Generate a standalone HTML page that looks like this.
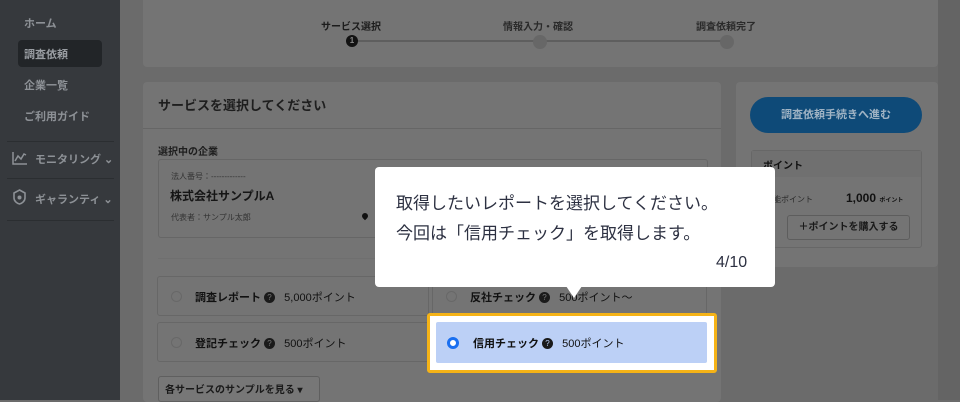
<!DOCTYPE html>
<html><head><meta charset="utf-8"><style>
*{margin:0;padding:0;box-sizing:border-box}
body{width:960px;height:400px;overflow:hidden;background:#6b6b6b;font-family:"Liberation Sans","Noto Sans CJK JP",sans-serif;position:relative;color:#111}
.a{position:absolute}
.sb{left:0;top:0;width:120px;height:400px;background:#36393d}
.sb .it{position:absolute;left:24px;font-size:11px;font-weight:bold;color:#8d9196}
.hr{position:absolute;left:7px;width:107px;height:1px;background:#2b2e31}
.card{background:#747474;border-radius:4px}
.b{font-weight:bold}
.opt{position:absolute;border:1px solid #676767;border-radius:3px;height:40px;background:#747474}
.rad{position:absolute;left:13px;top:14px;width:11px;height:11px;border:1px solid #686868;border-radius:50%}
.q{display:inline-block;width:11px;height:11px;border-radius:50%;background:#1a1a1a;color:#777;font-size:8px;text-align:center;line-height:11px;vertical-align:1px;margin-left:3px}
.ot{position:absolute;left:37px;top:12px;font-size:11px;white-space:nowrap}
</style></head><body>
<div class="a sb">
<div class="it" style="top:15px">ホーム</div>
<div class="a" style="left:18px;top:40px;width:84px;height:27px;background:#222528;border-radius:4px"></div>
<div class="it" style="top:46px;color:#9a9ea3">調査依頼</div>
<div class="it" style="top:77px">企業一覧</div>
<div class="it" style="top:108px">ご利用ガイド</div>
<div class="hr" style="top:141px"></div>
<svg class="a" style="left:12px;top:151px" width="16" height="14" viewBox="0 0 16 14"><path d="M1 1V13H15M3 10L6 5L9 8L12 3L14 4" stroke="#8d9196" stroke-width="1.5" fill="none"/></svg>
<div class="it" style="left:35px;top:151px">モニタリング ⌄</div>
<div class="hr" style="top:178px"></div>
<svg class="a" style="left:12px;top:189px" width="15" height="16" viewBox="0 0 15 16"><path d="M7.5 1L13 4V9C13 12 10 14.5 7.5 15C5 14.5 2 12 2 9V4Z" stroke="#8d9196" stroke-width="1.6" fill="none"/><circle cx="7.5" cy="8.5" r="2" fill="#8d9196"/></svg>
<div class="it" style="left:35px;top:191px">ギャランティ ⌄</div>
<div class="hr" style="top:220px"></div>
</div>
<div class="a" style="left:938px;top:0;width:22px;height:400px;background:#646464"></div>
<div class="a card" style="left:143px;top:0;width:795px;height:67px;border-radius:0 0 4px 4px"></div>
<div class="a b" style="left:321px;top:18px;font-size:10px;color:#1c1c1c">サービス選択</div>
<div class="a b" style="left:503px;top:18px;font-size:10px;color:#2a2a2a">情報入力・確認</div>
<div class="a b" style="left:696px;top:18px;font-size:10px;color:#2a2a2a">調査依頼完了</div>
<div class="a" style="left:352px;top:40px;width:376px;height:2px;background:#5e5e5e"></div>
<div class="a b" style="left:346px;top:35px;width:12px;height:12px;border-radius:50%;background:#121212;color:#888;font-size:8px;text-align:center;line-height:12px">1</div>
<div class="a" style="left:533px;top:35px;width:14px;height:14px;border-radius:50%;background:#676767"></div>
<div class="a" style="left:720px;top:35px;width:14px;height:14px;border-radius:50%;background:#676767"></div>
<div class="a card" style="left:143px;top:82px;width:578px;height:320px"></div>
<div class="a b" style="left:158px;top:95px;font-size:13px;color:#1e1e1e">サービスを選択してください</div>
<div class="a" style="left:143px;top:128px;width:578px;height:1px;background:#666"></div>
<div class="a b" style="left:158px;top:143px;font-size:10px;color:#1e1e1e">選択中の企業</div>
<div class="a" style="left:158px;top:159px;width:550px;height:79px;border:1px solid #666;border-radius:3px"></div>
<div class="a" style="left:171px;top:171px;font-size:8px;color:#333">法人番号：-------------</div>
<div class="a b" style="left:170px;top:187px;font-size:12px;color:#151515">株式会社サンプルA</div>
<div class="a" style="left:171px;top:212px;font-size:8px;color:#333">代表者：サンプル太郎</div>
<div class="a" style="left:362px;top:213px;width:6px;height:6px;border-radius:50% 50% 50% 0;transform:rotate(-45deg);background:#111"></div>
<div class="a" style="left:158px;top:258px;width:550px;height:1px;background:#6f6f6f"></div>
<div class="opt" style="left:157px;top:276px;width:272px"><div class="rad"></div><div class="ot"><b>調査レポート</b><span class="q">?</span>&nbsp;&nbsp; 5,000ポイント</div></div>
<div class="opt" style="left:432px;top:276px;width:275px"><div class="rad"></div><div class="ot"><b>反社チェック</b><span class="q">?</span>&nbsp;&nbsp; 500ポイント〜</div></div>
<div class="opt" style="left:157px;top:322px;width:272px"><div class="rad"></div><div class="ot"><b>登記チェック</b><span class="q">?</span>&nbsp;&nbsp; 500ポイント</div></div>
<div class="a" style="left:158px;top:376px;width:162px;height:26px;border:1px solid #5f5f5f;border-radius:3px;background:#777"></div>
<div class="a b" style="left:165px;top:381px;font-size:10px;color:#1a1a1a">各サービスのサンプルを見る ▾</div>
<div class="a card" style="left:736px;top:82px;width:202px;height:185px"></div>
<div class="a b" style="left:750px;top:97px;width:172px;height:36px;border-radius:18px;background:#0e4a78;color:#9fb3c4;font-size:11px;text-align:center;line-height:36px">調査依頼手続きへ進む</div>
<div class="a" style="left:751px;top:150px;width:171px;height:98px;border:1px solid #676767;border-radius:3px"></div>
<div class="a" style="left:752px;top:151px;width:169px;height:26px;background:#707070"></div>
<div class="a b" style="left:763px;top:157px;font-size:10px">ポイント</div>
<div class="a" style="left:757px;top:194px;font-size:8px;color:#2a2a2a">用可能ポイント</div>
<div class="a b" style="left:846px;top:191px;font-size:12px;color:#111">1,000 <span style="font-size:6px">ポイント</span></div>
<div class="a b" style="left:787px;top:215px;width:123px;height:25px;border:1px solid #5d5d5d;border-radius:3px;font-size:10px;text-align:center;line-height:23px;color:#1a1a1a">＋ポイントを購入する</div>
<div class="a" style="left:375px;top:167px;width:400px;height:120px;background:#fff;border-radius:4px"></div>
<div class="a" style="left:566px;top:286px;width:0;height:0;border-left:8px solid transparent;border-right:8px solid transparent;border-top:12px solid #fff"></div>
<div class="a" style="left:396px;top:189px;font-size:17px;color:#2d3142;line-height:30px;white-space:nowrap">取得したいレポートを選択してください。<br>今回は「信用チェック」を取得します。</div>
<div class="a" style="left:716px;top:254px;font-size:16px;color:#2d3142">4/10</div>
<div class="a" style="left:427px;top:313px;width:290px;height:60px;border:3px solid #f5b317;border-radius:3px;background:#fff"></div>
<div class="a" style="left:436px;top:322px;width:271px;height:41px;background:#bcd0f6;border-radius:2px"></div>
<div class="a" style="left:447px;top:337px;width:12px;height:12px;border-radius:50%;border:3.5px solid #1a6ff0;background:#fff"></div>
<div class="a" style="left:473px;top:335px;font-size:11px;white-space:nowrap"><b>信用チェック</b><span class="q" style="color:#bcd0f6">?</span>&nbsp;&nbsp; 500ポイント</div>
</body></html>
